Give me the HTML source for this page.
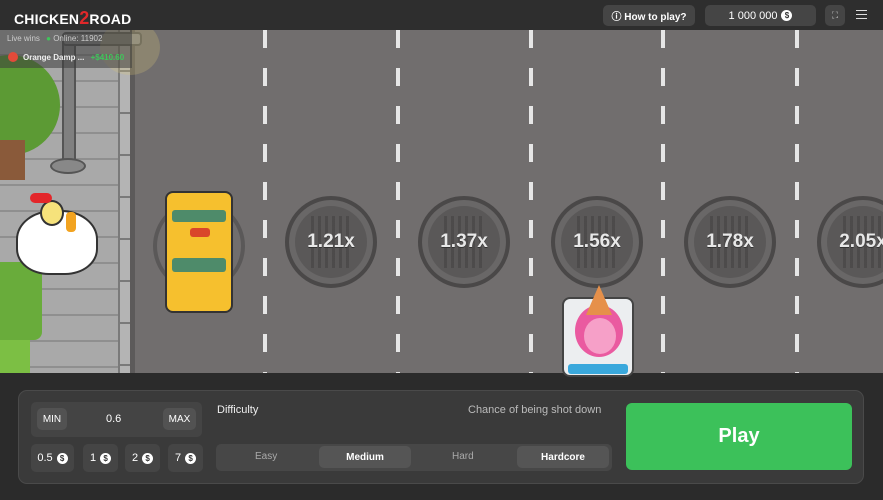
<!DOCTYPE html>
<html><head><meta charset="utf-8"><style>
*{margin:0;padding:0;box-sizing:border-box}
body{width:883px;height:500px;overflow:hidden;background:#2b2b2b;font-family:"Liberation Sans",sans-serif;position:relative}
.a{position:absolute}
.road{left:0;top:30px;width:883px;height:343px;background:#716e6e}
.lane{width:4px;top:30px;height:343px;background:repeating-linear-gradient(#e6e6e6 0 18px,transparent 18px 38px);background-position:0 0}
.mh{width:92px;height:92px;border-radius:50%;background:#5a5858;border:4px solid #4a4848;box-shadow:inset 0 0 0 6px #696767;display:flex;align-items:center;justify-content:center;color:#e8e8e8;font-weight:bold;font-size:19px;text-shadow:0 1px 0 #333}
.mh::before{content:"";position:absolute;left:22px;right:22px;top:16px;bottom:16px;background:repeating-linear-gradient(90deg,#474545 0 3px,transparent 3px 7px);opacity:.7;z-index:0}
.mh span{position:relative;z-index:1}
.btn{background:#454545;border-radius:5px;color:#fff;font-size:11px;display:flex;align-items:center;justify-content:center;gap:4px}
.coin{width:11px;height:11px;border-radius:50%;background:#fff;color:#333;font-size:8px;font-weight:bold;display:inline-flex;align-items:center;justify-content:center}
</style></head><body>
<div class="a road"></div>
<div class="a" style="left:0;top:30px;width:135px;height:343px;background:repeating-linear-gradient(#a9a9a9 0 24px,#8f8f8f 24px 26px)"></div>
<div class="a" style="left:118px;top:30px;width:17px;height:343px;background:repeating-linear-gradient(#b4b4b4 0 40px,#7a7a7a 40px 42px);border-left:2px solid #7a7a7a"></div>
<div class="a" style="left:130px;top:30px;width:5px;height:343px;background:#5c5a5a"></div>
<div class="a" style="left:-40px;top:55px;width:100px;height:100px;border-radius:50%;background:#5c9a34"></div>
<div class="a" style="left:0;top:140px;width:25px;height:40px;background:#8a5a3a"></div>
<div class="a" style="left:0;top:262px;width:42px;height:78px;background:#69ac3b;border-radius:0 8px 8px 0"></div>
<div class="a" style="left:0;top:340px;width:30px;height:33px;background:#7cbf44"></div>
<div class="a" style="left:62px;top:38px;width:14px;height:130px;background:#808080;border:2px solid #555;border-radius:3px"></div>
<div class="a" style="left:62px;top:32px;width:80px;height:14px;background:#808080;border:2px solid #555;border-radius:4px"></div>
<div class="a" style="left:50px;top:158px;width:36px;height:16px;background:#888;border:2px solid #555;border-radius:50%"></div>
<div class="a" style="left:100px;top:20px;width:60px;height:55px;border-radius:50%;background:rgba(220,200,120,.25)"></div>
<div class="a" style="left:16px;top:210px;width:82px;height:65px;background:#fff;border:2px solid #333;border-radius:45% 45% 40% 40%"></div>
<div class="a" style="left:40px;top:200px;width:24px;height:26px;background:#f6e27b;border:2px solid #333;border-radius:50%"></div>
<div class="a" style="left:30px;top:193px;width:22px;height:10px;background:#e3262a;border-radius:6px"></div>
<div class="a" style="left:66px;top:212px;width:10px;height:20px;background:#f2a320;border-radius:4px"></div>
<div class="a lane" style="left:263px"></div>
<div class="a lane" style="left:396px"></div>
<div class="a lane" style="left:529px"></div>
<div class="a lane" style="left:661px"></div>
<div class="a lane" style="left:795px"></div>
<div class="a mh" style="left:285px;top:196px"><span>1.21x</span></div>
<div class="a mh" style="left:418px;top:196px"><span>1.37x</span></div>
<div class="a mh" style="left:551px;top:196px"><span>1.56x</span></div>
<div class="a mh" style="left:684px;top:196px"><span>1.78x</span></div>
<div class="a mh" style="left:817px;top:196px"><span>2.05x</span></div>
<div class="a" style="left:153px;top:200px;width:92px;height:92px;border-radius:50%;border:4px solid #5a5858"></div>
<div class="a" style="left:165px;top:191px;width:68px;height:122px;background:#f6c02e;border:2px solid #333;border-radius:8px"></div>
<div class="a" style="left:172px;top:210px;width:54px;height:12px;background:#4e8b6a;border-radius:3px"></div>
<div class="a" style="left:190px;top:228px;width:20px;height:9px;background:#d9462a;border-radius:3px"></div>
<div class="a" style="left:172px;top:258px;width:54px;height:14px;background:#4e8b6a;border-radius:3px"></div>
<div class="a" style="left:562px;top:297px;width:72px;height:80px;background:#eceef0;border:2px solid #444;border-radius:8px"></div>
<div class="a" style="left:575px;top:305px;width:48px;height:52px;border-radius:50%;background:#ea5aa0"></div>
<div class="a" style="left:584px;top:318px;width:32px;height:36px;border-radius:50%;background:#f6a0c8"></div>
<div class="a" style="left:586px;top:285px;width:0;height:0;border-left:13px solid transparent;border-right:13px solid transparent;border-bottom:30px solid #e6904a"></div>
<div class="a" style="left:568px;top:364px;width:60px;height:10px;background:#3aa8dc;border-radius:3px"></div>
<div class="a" style="left:0;top:0;width:883px;height:30px;background:#2e2e2e"></div>
<div class="a" style="left:14px;top:8px;color:#fff;font-weight:900;font-size:14px;letter-spacing:.2px">CHICKEN<span style="color:#e0282a;font-size:18px">2</span>ROAD</div>
<div class="a btn" style="left:603px;top:5px;width:92px;height:21px;font-weight:bold;font-size:10px">ⓘ How to play?</div>
<div class="a btn" style="left:705px;top:5px;width:111px;height:21px;font-size:11px">1 000 000 <span class="coin">$</span></div>
<div class="a btn" style="left:825px;top:5px;width:20px;height:21px;font-size:9px;color:#ccc">⛶</div>
<div class="a" style="left:856px;top:10px;width:11px;height:9px;border-top:1.5px solid #ddd;border-bottom:1.5px solid #ddd"><div style="margin-top:2.5px;border-top:1.5px solid #ddd"></div></div>
<div class="a" style="left:0;top:30px;width:132px;height:38px;background:rgba(60,60,60,.55)"></div>
<div class="a" style="left:7px;top:34px;color:#ccc;font-size:8px">Live wins <span style="color:#3fc55a;margin-left:4px">●</span> Online: 11902</div>
<div class="a" style="left:8px;top:52px;width:10px;height:10px;border-radius:50%;background:#e34a3a"></div>
<div class="a" style="left:23px;top:53px;color:#eee;font-size:8px;font-weight:bold">Orange Damp ... <span style="color:#3fc55a;margin-left:4px">+$410.60</span></div>
<div class="a" style="left:18px;top:390px;width:846px;height:94px;background:#3a3a3a;border:1px solid #4a4a4a;border-radius:9px"></div>
<div class="a" style="left:31px;top:402px;width:171px;height:35px;background:#444;border-radius:5px"></div>
<div class="a btn" style="left:37px;top:408px;width:30px;height:22px;background:#525252;font-size:10px">MIN</div>
<div class="a" style="left:106px;top:413px;color:#fff;font-size:11px">0.6</div>
<div class="a btn" style="left:163px;top:408px;width:33px;height:22px;background:#525252;font-size:10px">MAX</div>
<div class="a btn" style="left:31px;top:444px;width:43px;height:28px;font-size:11px">0.5<span class="coin">$</span></div>
<div class="a btn" style="left:83px;top:444px;width:35px;height:28px">1<span class="coin">$</span></div>
<div class="a btn" style="left:125px;top:444px;width:35px;height:28px">2<span class="coin">$</span></div>
<div class="a btn" style="left:168px;top:444px;width:35px;height:28px">7<span class="coin">$</span></div>
<div class="a" style="left:217px;top:404px;color:#eee;font-size:11px">Difficulty</div>
<div class="a" style="left:468px;top:404px;color:#bbb;font-size:11px">Chance of being shot down</div>
<div class="a" style="left:216px;top:444px;width:396px;height:27px;background:#474747;border-radius:5px"></div>
<div class="a" style="left:255px;top:451px;color:#aaa;font-size:10px">Easy</div>
<div class="a btn" style="left:319px;top:446px;width:92px;height:22px;background:#555;font-size:10px;font-weight:bold">Medium</div>
<div class="a" style="left:452px;top:451px;color:#aaa;font-size:10px">Hard</div>
<div class="a btn" style="left:517px;top:446px;width:92px;height:22px;background:#555;font-size:10px;font-weight:bold">Hardcore</div>
<div class="a" style="left:626px;top:403px;width:226px;height:67px;background:#3cc15a;border-radius:6px;color:#fff;font-weight:bold;font-size:20px;display:flex;align-items:center;justify-content:center">Play</div>
</body></html>
